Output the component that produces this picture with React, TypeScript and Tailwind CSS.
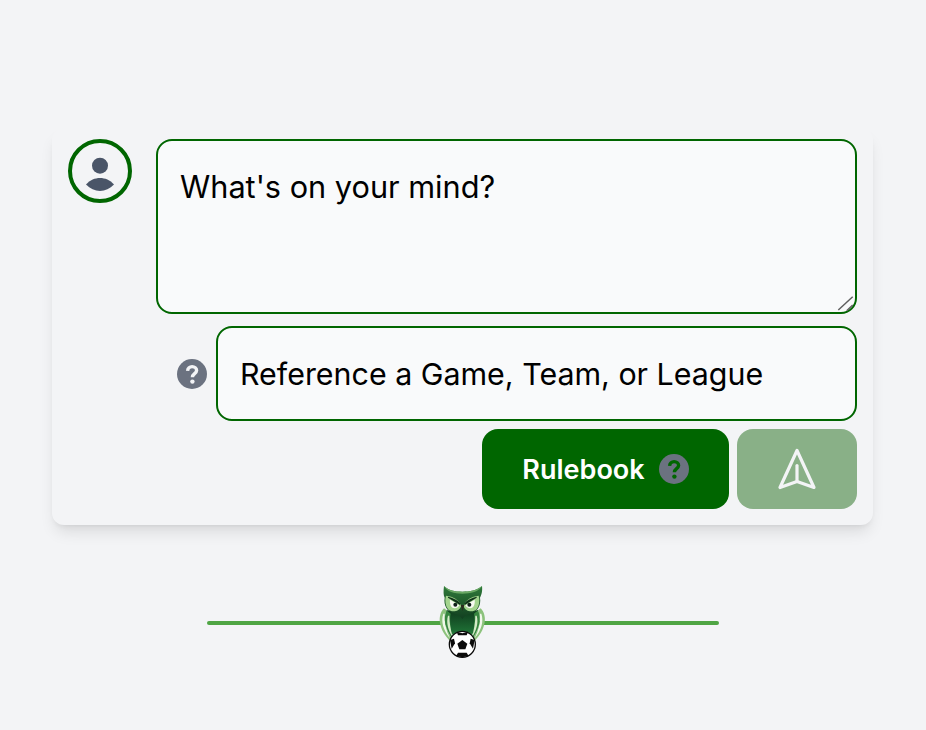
function HelpIcon({ glyph }: { glyph: string }) {
  return (
    <svg viewBox="0 0 30 30" className="h-[30px] w-[30px] shrink-0">
      <circle cx="15" cy="15" r="15" fill="#6b7280" />
      <path d="M10.6 11.8 C10.8 9.2 12.8 7.6 15.1 7.6 C17.6 7.6 19.6 9.3 19.6 11.6 C19.6 14.6 15.4 14.8 15.4 18.2" fill="none" stroke={glyph} strokeWidth="3.4" />
      <circle cx="15.4" cy="22.6" r="2.2" fill={glyph} />
    </svg>
  );
}

function UserAvatar() {
  return (
    <div className="flex h-16 w-16 shrink-0 items-center justify-center rounded-full border-4 border-[#006600]">
      <svg viewBox="0 0 56 56" className="h-14 w-14" fill="#4a5568">
        <circle cx="28" cy="22.7" r="8" />
        <path d="M14 41.5 C18 37 23 35 28 35 C33 35 38 37 42 41.5 C38 45.8 33 48 28 48 C23 48 18 45.8 14 41.5 Z" />
      </svg>
    </div>
  );
}

function SendIcon() {
  return (
    <svg viewBox="0 0 40 44" className="h-11 w-10" fill="none" stroke="#f3f4f6" strokeWidth="3.2" strokeLinecap="round" strokeLinejoin="round">
      <path d="M20 3.5 L37 40.5 L20 34.5 L3 40.5 Z" />
      <path d="M20 18.5 L20 34" />
    </svg>
  );
}

// left half of the owl, mirrored for the right side
function OwlSide() {
  return (
    <>
      {/* wing stripes */}
      <path d="M72 100 C50 122 56 165 92 200 L100 196 C76 165 68 130 80 106 Z" fill="#8cc27c" />
      <path d="M70 116 C62 140 70 165 90 190 C78 165 72 140 74 116 Z" fill="#f2f8ec" />
      <path d="M80 106 C68 130 76 165 100 196 C92 162 88 135 92 116 Z" fill="#37863f" />
      <path d="M84 122 C78 142 84 165 98 186 C92 165 88 142 88 122 Z" fill="#d5ebc8" />
      {/* face ring */}
      <path d="M78 62 C100 64 116 74 124 92 C118 110 96 114 84 103 C76 92 74 76 78 62 Z" fill="#a3d48e" />
      {/* eye */}
      <path d="M90 74 L118 91 C112 102 98 102 93 94 C90 88 89 80 90 74 Z" fill="#f8faf2" />
      <circle cx="106" cy="89" r="6" fill="#10201a" />
      {/* brow */}
      <path d="M84 68 L120 90 L122 86 C112 74 98 68 84 65 Z" fill="#0f3319" />
    </>
  );
}

function OwlLogo() {
  return (
    <svg viewBox="0 0 270 270" className="absolute left-[-43px] top-[-48px] h-[90px] w-[90px]">
      <defs>
        <linearGradient id="owlBody" x1="0" y1="0" x2="0" y2="1">
          <stop offset="0" stopColor="#0f3a1c" />
          <stop offset="0.6" stopColor="#1d6b33" />
          <stop offset="1" stopColor="#3f9a4c" />
        </linearGradient>
        <linearGradient id="owlHead" x1="0" y1="0" x2="0" y2="1">
          <stop offset="0" stopColor="#2f7a3a" />
          <stop offset="1" stopColor="#123f20" />
        </linearGradient>
      </defs>
      {/* body */}
      <path d="M80 105 C76 145 96 192 127 205 C158 192 178 145 174 105 L127 120 Z" fill="url(#owlBody)" />
      {/* head */}
      <path d="M72 33 C86 46 104 50 127 50 C150 50 170 46 186 33 C188 50 184 60 180 68 C184 90 172 112 150 116 C140 118 132 124 127 132 C122 124 114 118 104 116 C82 112 70 90 74 68 C70 60 70 50 72 33 Z" fill="url(#owlHead)" />
      <path d="M72 33 C86 46 104 50 127 50 C150 50 170 46 186 33 C178 50 150 56 127 56 C104 56 80 50 72 33 Z" fill="#6aa864" />
      <OwlSide />
      <g transform="translate(254 0) scale(-1 1)">
        <OwlSide />
      </g>
      {/* beak */}
      <path d="M122 90 L133 90 L128 108 Z" fill="#2c2a1e" />
      {/* ball */}
      <circle cx="127" cy="208" r="39" fill="#ffffff" stroke="#0b0b0b" strokeWidth="4" />
      <path d="M127 195 L142 206 L136 223 L118 223 L112 206 Z" fill="#0b0b0b" />
      <path d="M110 170 L127 175 L144 170 L140 181 L114 181 Z" fill="#0b0b0b" />
      <path d="M90 195 L102 191 L105 205 L95 221 Z" fill="#0b0b0b" />
      <path d="M164 195 L152 191 L149 205 L159 221 Z" fill="#0b0b0b" />
      <path d="M108 243 L114 233 L140 233 L146 243 L127 247 Z" fill="#0b0b0b" />
    </svg>
  );
}

export default function App() {
  return (
    <div className="min-h-[730px] bg-gray-100 pt-[128px] font-['Inter',sans-serif]">
      <div className="ml-[52px] w-[821px] rounded-xl bg-gray-100 px-4 pb-4 pt-[11px] shadow-lg">
        <div className="flex gap-6">
          <UserAvatar />
          <div className="relative h-[175px] w-[701px]">
            <textarea
              placeholder="What's on your mind?"
              className="h-full w-full resize-none rounded-2xl border-2 border-[#006600] bg-[#f9fafb] px-[22px] pb-6 pt-[28px] text-[30.7px] leading-[1.2] text-black outline-none placeholder:text-black"
            />
            {/* resize grip */}
            <svg viewBox="0 0 20 20" className="absolute bottom-0 right-0 h-5 w-5" stroke="#5f5f5f" strokeWidth="1.5">
              <path d="M1.3 16 L15.7 2.7" />
              <path d="M9.7 16.7 L15.7 11" />
            </svg>
          </div>
        </div>
        <div className="mt-3 flex items-center justify-end gap-[9px]">
          <HelpIcon glyph="#f3f4f6" />
          <div className="flex h-[95px] w-[641px] items-center rounded-2xl border-2 border-[#006600] bg-[#f9fafb] px-[22px] pt-[3px] text-[30.4px] text-black">
            Reference a Game, Team, or League
          </div>
        </div>
        <div className="mt-2 flex justify-end gap-2">
          <button className="flex h-20 w-[247px] items-center justify-center gap-[14px] rounded-2xl bg-[#006600] text-[27px] font-semibold text-white">
            <span className="pt-0.5">Rulebook</span>
            <HelpIcon glyph="#006600" />
          </button>
          <button className="flex h-20 w-[120px] items-center justify-center rounded-2xl bg-[#89b087]">
            <SendIcon />
          </button>
        </div>
      </div>
      <div className="mx-auto mt-[96px] h-1 w-[512px] rounded-full bg-[#4fa544]">
        <div className="relative left-[256px] top-[2px] h-0 w-0">
          <OwlLogo />
        </div>
      </div>
    </div>
  );
}
